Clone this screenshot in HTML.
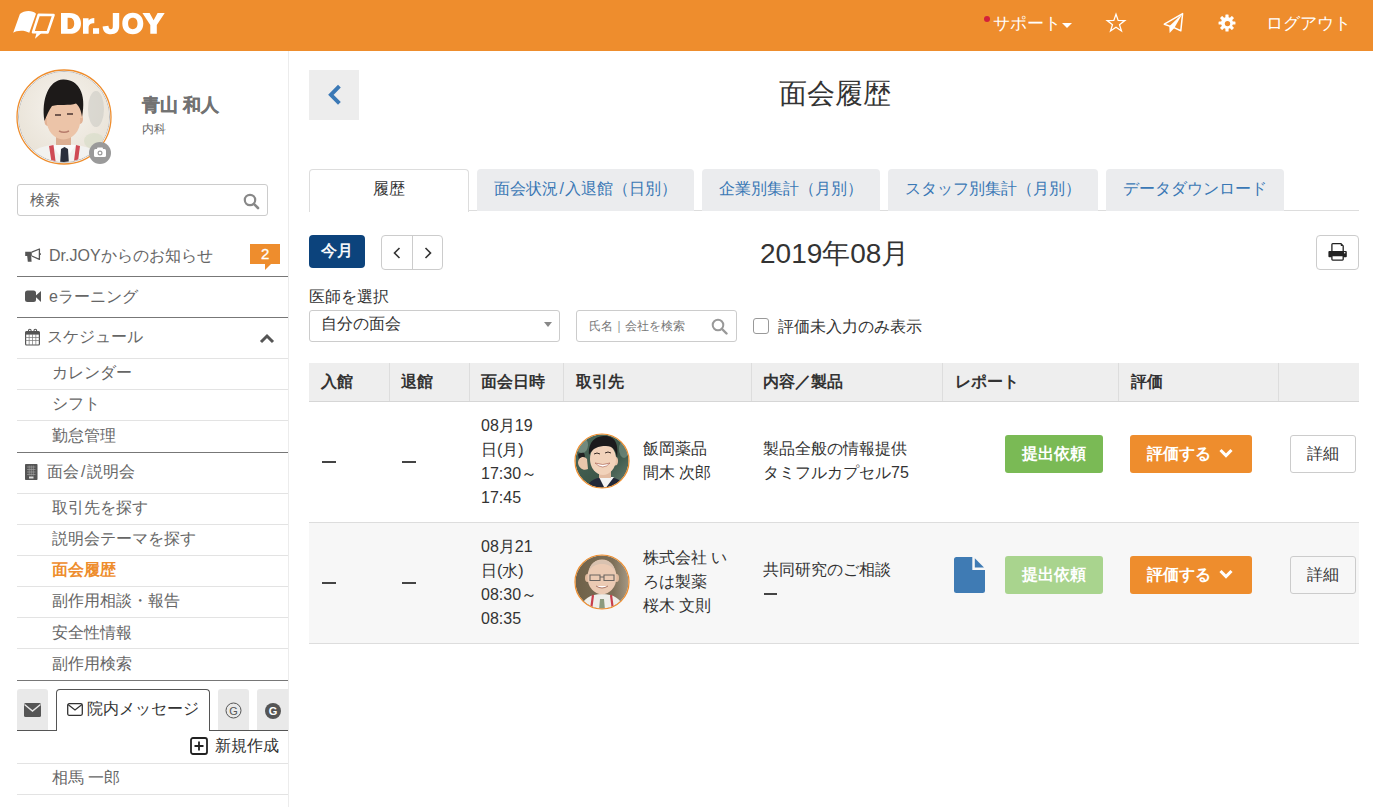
<!DOCTYPE html>
<html lang="ja">
<head>
<meta charset="utf-8">
<style>
*{box-sizing:border-box;margin:0;padding:0}
html,body{width:1373px;height:807px;overflow:hidden;background:#fff}
body{font-family:"Liberation Sans",sans-serif;color:#333;font-size:16px;position:relative}
.abs{position:absolute}
#hdr{position:absolute;left:0;top:0;width:1373px;height:51px;background:#ee8d2d}
#side{position:absolute;left:0;top:51px;width:289px;height:756px;border-right:1px solid #ececec}
.t{position:absolute;white-space:nowrap;line-height:1}
.hl{position:absolute;left:17px;width:271px;height:1px}
.dk{background:#777}
.lt{background:#e3e3e3}
.side-item{color:#666;font-size:16px}
.tab{top:169px;height:42px;background:#ebecee;border-radius:4px 4px 0 0}
.tabt{top:181px;font-size:16px;color:#3a78b5}
.vl{top:363px;width:1px;height:38px;background:#ddd}
.th{top:374px;font-size:16px;font-weight:bold;color:#333}
.td{font-size:16px;color:#333;white-space:nowrap}
.btn{color:#fff;font-size:16px;font-weight:bold;border-radius:3px;line-height:38px;padding-left:17px}
.btn2{color:#333;font-size:16px;border:1px solid #ccc;border-radius:3px;line-height:36px;text-align:center;background:transparent}
</style>
</head>
<body>
<div id="hdr">
  <svg class="abs" style="left:0;top:0" width="180" height="51" viewBox="0 0 180 51">
    <path d="M13.2 32.8 C16 30.5 24 29.5 29.3 32.8 L36 13.7 C33 10 24 10 19.9 13.9 Z" fill="#fff"/>
    <path d="M38.7 14.8 L53.5 15 L47.6 32.4 L33 32.3 Z" fill="none" stroke="#fff" stroke-width="2.6" stroke-linejoin="round"/>
    <path d="M36.5 33 L35 38.7 L41.5 33 Z" fill="#fff"/>
    <path fill="#fff" fill-rule="evenodd" d="M61 13 H69.5 C77 13 81 17.2 81 23.4 C81 29.6 77 33.8 69.5 33.8 H61 Z M67.6 17.8 V29 H69.2 C72.5 29 74.2 27 74.2 23.4 C74.2 19.8 72.5 17.8 69.2 17.8 Z"/>
    <path fill="#fff" d="M83 18.3 H88.6 V20.6 C89.6 18.9 91.4 18 94.3 18 V23.2 C90.6 23.2 88.6 24.6 88.6 27.8 V33.8 H83 Z"/>
    <rect x="93" y="28.2" width="6.1" height="5.6" fill="#fff"/>
    <path fill="#fff" d="M112.8 13 H119.2 V26 C119.2 31.5 116 34.2 110.9 34.2 C105.8 34.2 102.9 31.4 102.6 26.4 L108.4 25.8 C108.6 28.2 109.4 29.2 110.9 29.2 C112.3 29.2 112.8 28.2 112.8 26.2 Z"/>
    <path fill="#fff" fill-rule="evenodd" d="M132.8 12.7 C139.2 12.7 143.3 17 143.3 23.5 C143.3 30 139.2 34.3 132.8 34.3 C126.4 34.3 122.3 30 122.3 23.5 C122.3 17 126.4 12.7 132.8 12.7 Z M132.8 17.8 C130 17.8 128.1 19.9 128.1 23.5 C128.1 27.1 130 29.2 132.8 29.2 C135.6 29.2 137.5 27.1 137.5 23.5 C137.5 19.9 135.6 17.8 132.8 17.8 Z"/>
    <path fill="#fff" d="M142.4 13 H149.6 L153.6 20.3 L157.6 13 H164.7 L156.8 25 V33.8 H150.3 V25 Z"/>
  </svg>
  <div class="abs" style="left:984px;top:16px;width:6px;height:6px;border-radius:50%;background:#d3213a"></div>
  <div class="t" style="left:993px;top:15px;font-size:17px;color:#fff">サポート</div>
  <div class="abs" style="left:1062px;top:23px;width:0;height:0;border-left:5px solid transparent;border-right:5px solid transparent;border-top:5px solid #fff"></div>
  <svg class="abs" style="left:1100px;top:8px" width="32" height="30" viewBox="0 0 32 30"><path transform="translate(16 15.2) scale(0.9) translate(-16 -15.2)" d="M16 5.2 L18.4 12.2 L25.8 12.3 L19.9 16.8 L22.1 23.9 L16 19.6 L9.9 23.9 L12.1 16.8 L6.2 12.3 L13.6 12.2 Z" fill="none" stroke="#fff" stroke-width="1.4" stroke-linejoin="miter"/></svg>
  <svg class="abs" style="left:1160px;top:10px" width="26" height="26" viewBox="1160 10 26 26"><path d="M1164.3 24.2 L1182.6 13.6 L1180.8 30.8 L1174 27.6 Z" fill="none" stroke="#fff" stroke-width="1.5" stroke-linejoin="round"/><path d="M1169.3 26.3 L1182.6 13.6 L1174.3 27.9 L1169.6 33 Z" fill="#fff"/></svg>
  <svg class="abs" style="left:1215.5px;top:11.8px" width="22" height="22" viewBox="-11 -11 22 22"><g fill="#fff" transform="scale(0.94)"><circle r="6.4"/><rect x="-1.7" y="-9" width="3.4" height="18" rx="0.6"/><rect x="-1.7" y="-9" width="3.4" height="18" rx="0.6" transform="rotate(45)"/><rect x="-1.7" y="-9" width="3.4" height="18" rx="0.6" transform="rotate(90)"/><rect x="-1.7" y="-9" width="3.4" height="18" rx="0.6" transform="rotate(135)"/></g><circle r="2.7" fill="#ee8d2d" transform="translate(0.5 0.6)"/></svg>
  <div class="t" style="left:1266px;top:15px;font-size:17px;color:#fff">ログアウト</div>
</div>

<div id="side">
</div>
<!-- avatar -->
<svg class="abs" style="left:16px;top:69px" width="96" height="96" viewBox="0 0 96 96">
  <defs><clipPath id="cp1"><circle cx="48" cy="48" r="45"/></clipPath>
  <radialGradient id="bg1" cx="0.5" cy="0.4" r="0.7"><stop offset="0" stop-color="#f6f3ee"/><stop offset="1" stop-color="#e6dfd2"/></radialGradient></defs>
  <circle cx="48" cy="48" r="47" fill="#fff" stroke="#ee8d2d" stroke-width="1.3"/>
  <circle cx="48" cy="48" r="45.5" fill="none" stroke="#aaa" stroke-width="0.8"/>
  <g clip-path="url(#cp1)">
    <rect x="0" y="0" width="96" height="96" fill="url(#bg1)"/>
    <ellipse cx="80" cy="40" rx="8" ry="18" fill="#c6c5c0" opacity="0.5"/>
    <ellipse cx="78" cy="72" rx="10" ry="8" fill="#d5dcc6" opacity="0.6"/>
    <path d="M10 96 C12 82 22 76 48 75 C74 76 84 82 86 96 Z" fill="#f2f2f0"/>
    <rect x="40" y="62" width="15" height="16" fill="#dcae92"/>
    <path d="M36 76 L48 92 L60 76 Z" fill="#fbfbfb"/>
    <path d="M45 80 L48.5 78 L52 80 L53 96 L44 96 Z" fill="#2a2e3b"/>
    <path d="M33 77 L36 96 L40 96 L37.5 76 Z" fill="#cf4a55"/>
    <path d="M60 76 L57.5 96 L61.5 96 L64 77 Z" fill="#cf4a55"/>
    <ellipse cx="31.5" cy="52" rx="3" ry="5" fill="#e2b295"/>
    <ellipse cx="64" cy="50" rx="3" ry="5" fill="#e2b295"/>
    <ellipse cx="47.5" cy="51" rx="16.8" ry="19.5" fill="#ecc4a8"/><rect x="30" y="32" width="36.5" height="17" fill="#ecc4a8"/>
    <path d="M28.5 52 C25 30 33 11 47 10.5 C62 10 71 24 66 48 C65 41 63 37 60 34.5 C54 37 42 35 36 37 C33 41 31 46 28.5 52 Z" fill="#1d1a19"/>
    <path d="M39 46 h6 M51 45 h6" stroke="#4a3530" stroke-width="1.4"/>
    <path d="M43 62 C46 63.5 50 63.5 53 62" fill="none" stroke="#b77c6c" stroke-width="1.4"/>
  </g>
  <circle cx="84" cy="84" r="11" fill="#9a9a9a"/>
  <rect x="78" y="80" width="12" height="8" rx="1.5" fill="#fff"/>
  <rect x="81" y="78.5" width="6" height="3" rx="1" fill="#fff"/>
  <circle cx="84" cy="84" r="2.5" fill="#9a9a9a"/>
  <circle cx="84" cy="84" r="1.3" fill="#fff"/>
</svg>
<div class="t" style="left:142px;top:96px;font-size:18px;font-weight:bold;color:#727272;-webkit-text-stroke:0.3px #727272">青山 和人</div>
<div class="t" style="left:142px;top:123px;font-size:12px;color:#666">内科</div>
<div class="abs" style="left:17px;top:184px;width:251px;height:32px;border:1px solid #ccc;border-radius:3px"></div>
<div class="t" style="left:30px;top:192px;font-size:15px;color:#666">検索</div>
<svg class="abs" style="left:243px;top:193px" width="17" height="17" viewBox="0 0 17 17"><circle cx="7" cy="7" r="5.2" fill="none" stroke="#888" stroke-width="2.2"/><path d="M10.8 10.8 L15 15" stroke="#888" stroke-width="2.6" stroke-linecap="round"/></svg>

<!-- menu -->
<svg class="abs" style="left:24px;top:247px" width="18" height="16" viewBox="24 247 18 16"><path d="M25.2 251.8 H31.8 V256 H31.2 L31.6 261.8 H27.8 L27.2 256 H25.2 Z" fill="#555"/><path d="M31.8 252.1 L39.4 249 V259.4 L31.8 256" fill="none" stroke="#555" stroke-width="1.3" stroke-linejoin="round"/><rect x="39.6" y="253.2" width="1.2" height="1.8" fill="#555"/></svg>
<div class="t side-item" style="left:49px;top:248px">Dr.JOYからのお知らせ</div>
<div class="abs" style="left:250px;top:244px;width:30px;height:20px;background:#ee8d2d"></div>
<div class="abs" style="left:265px;top:264px;width:0;height:0;border-right:6px solid transparent;border-top:6px solid #ee8d2d"></div>
<div class="t" style="left:261px;top:246px;font-size:15px;color:#fff;-webkit-text-stroke:0.3px #fff">2</div>
<div class="hl dk" style="top:276px"></div>

<svg class="abs" style="left:25px;top:290px" width="16" height="13" viewBox="0 0 16 13"><rect x="0" y="0.5" width="11" height="11.5" rx="2.5" fill="#555"/><path d="M10 6.2 L16 1 V12 Z" fill="#555"/></svg>
<div class="t side-item" style="left:49px;top:289px">eラーニング</div>
<div class="hl dk" style="top:317px"></div>

<svg class="abs" style="left:25px;top:328px" width="15" height="18" viewBox="0 0 15 18"><rect x="0.6" y="3.6" width="13.8" height="13.4" rx="1" fill="none" stroke="#555" stroke-width="1.2"/><rect x="0.6" y="3.6" width="13.8" height="3" fill="#555"/><path d="M0.6 9.5 h13.8 M0.6 12.5 h13.8 M4.2 6 v11 M7.5 6 v11 M10.8 6 v11" stroke="#777" stroke-width="0.7"/><path d="M3.5 5 V2.5 a1.3 1.3 0 0 1 2.6 0 V5 M9 5 V2.5 a1.3 1.3 0 0 1 2.6 0 V5" fill="none" stroke="#555" stroke-width="1.1"/></svg>
<div class="t side-item" style="left:47px;top:329px">スケジュール</div>
<svg class="abs" style="left:259px;top:332px" width="16" height="12" viewBox="0 0 16 12"><path d="M2 10 L8 4 L14 10" fill="none" stroke="#555" stroke-width="3"/></svg>
<div class="hl lt" style="top:358px"></div>
<div class="t side-item" style="left:52px;top:365px">カレンダー</div>
<div class="hl lt" style="top:389px"></div>
<div class="t side-item" style="left:52px;top:396px">シフト</div>
<div class="hl lt" style="top:420px"></div>
<div class="t side-item" style="left:52px;top:428px">勤怠管理</div>
<div class="hl dk" style="top:452px"></div>

<svg class="abs" style="left:25px;top:464px" width="13" height="17" viewBox="0 0 13 17"><rect x="0" y="0" width="12.5" height="16" rx="0.8" fill="#555"/><path d="M2 3 h8.5 M2 5.5 h8.5 M2 8 h8.5 M2 10.5 h8.5 M4.2 1.5 v10 M6.25 1.5 v10 M8.3 1.5 v10" stroke="#aaa" stroke-width="0.6"/><rect x="4" y="12.5" width="4.5" height="2" fill="#ddd"/></svg>
<div class="t side-item" style="left:47px;top:464px">面会<span style="padding:0 2px 0 2px">/</span>説明会</div>
<div class="hl lt" style="top:493px"></div>
<div class="t side-item" style="left:52px;top:500px">取引先を探す</div>
<div class="hl lt" style="top:524px"></div>
<div class="t side-item" style="left:52px;top:531px">説明会テーマを探す</div>
<div class="hl lt" style="top:555px"></div>
<div class="t side-item" style="left:52px;top:562px;color:#ee8d2d;font-weight:bold">面会履歴</div>
<div class="hl lt" style="top:586px"></div>
<div class="t side-item" style="left:52px;top:593px">副作用相談・報告</div>
<div class="hl lt" style="top:617px"></div>
<div class="t side-item" style="left:52px;top:625px">安全性情報</div>
<div class="hl lt" style="top:648px"></div>
<div class="t side-item" style="left:52px;top:656px">副作用検索</div>
<div class="hl dk" style="top:680px"></div>

<!-- message tabs -->
<div class="abs" style="left:17px;top:689px;width:31px;height:42px;background:#e9e9e9;border-radius:3px 3px 0 0"></div>
<svg class="abs" style="left:24px;top:703px" width="17" height="14" viewBox="0 0 17 14"><rect x="0" y="0" width="17" height="14" rx="1.5" fill="#555"/><path d="M0.5 1.5 L8.5 8 L16.5 1.5" fill="none" stroke="#e9e9e9" stroke-width="1.4"/></svg>
<div class="abs" style="left:56px;top:689px;width:154px;height:42px;background:#fff;border:1px solid #555;border-bottom:none;border-radius:4px 4px 0 0"></div>
<svg class="abs" style="left:67px;top:703px" width="16" height="13" viewBox="0 0 16 13"><rect x="0.7" y="0.7" width="14.6" height="11.6" rx="1.5" fill="none" stroke="#333" stroke-width="1.3"/><path d="M1 1.5 L8 7 L15 1.5" fill="none" stroke="#333" stroke-width="1.3"/></svg>
<div class="t" style="left:87px;top:701px;font-size:16px;color:#333">院内メッセージ</div>
<div class="abs" style="left:218px;top:689px;width:31px;height:42px;background:#e9e9e9;border-radius:3px 3px 0 0"></div>
<svg class="abs" style="left:225px;top:702px" width="17" height="17" viewBox="0 0 17 17"><circle cx="8.5" cy="8.5" r="7.5" fill="none" stroke="#555" stroke-width="1"/><text x="8.5" y="12.5" font-size="11" text-anchor="middle" fill="#555" font-family="Liberation Sans">G</text></svg>
<div class="abs" style="left:257px;top:689px;width:31px;height:42px;background:#e9e9e9;border-radius:3px 0 0 0"></div>
<svg class="abs" style="left:264px;top:702px" width="18" height="18" viewBox="0 0 18 18"><circle cx="9" cy="9" r="8" fill="#555"/><text x="9" y="13" font-size="11" font-weight="bold" text-anchor="middle" fill="#fff" font-family="Liberation Sans">G</text></svg>
<div class="hl" style="top:730px;left:17px;width:39px;background:#555"></div>
<div class="hl" style="top:730px;left:210px;width:78px;background:#555"></div>

<svg class="abs" style="left:190px;top:737px" width="18" height="18" viewBox="0 0 18 18"><rect x="1" y="1" width="16" height="16" rx="2" fill="none" stroke="#222" stroke-width="1.8"/><path d="M9 4.5 V13.5 M4.5 9 H13.5" stroke="#222" stroke-width="1.8"/></svg>
<div class="t" style="left:215px;top:738px;font-size:16px;color:#333">新規作成</div>
<div class="hl lt" style="top:763px"></div>
<div class="t side-item" style="left:52px;top:770px">相馬 一郎</div>
<div class="hl lt" style="top:794px"></div>


<!-- main -->
<div class="abs" style="left:309px;top:70px;width:50px;height:50px;background:#ededed"></div>
<svg class="abs" style="left:326px;top:84px" width="18" height="22" viewBox="0 0 18 22"><path d="M13.4 2.2 L4.9 10.8 L13.4 19.4" fill="none" stroke="#3b79b6" stroke-width="3.9"/></svg>
<div class="t" style="left:779px;top:80px;font-size:28px;color:#333">面会履歴</div>

<!-- tabs -->
<div class="abs" style="left:309px;top:210px;width:1050px;height:1px;background:#ddd"></div>
<div class="abs" style="left:309px;top:169px;width:160px;height:43px;background:#fff;border:1px solid #ddd;border-bottom:none;border-radius:4px 4px 0 0"></div>
<div class="t" style="left:373px;top:181px;font-size:16px;color:#333">履歴</div>
<div class="abs tab" style="left:477px;width:217px"></div>
<div class="t tabt" style="left:494px">面会状況<span style="padding:0 1.5px">/</span>入退館（日別）</div>
<div class="abs tab" style="left:702px;width:178px"></div>
<div class="t tabt" style="left:719px">企業別集計（月別）</div>
<div class="abs tab" style="left:888px;width:210px"></div>
<div class="t tabt" style="left:905px">スタッフ別集計（月別）</div>
<div class="abs tab" style="left:1106px;width:178px"></div>
<div class="t tabt" style="left:1123px">データダウンロード</div>

<!-- toolbar -->
<div class="abs" style="left:309px;top:235px;width:56px;height:33px;background:#0c437c;border-radius:4px"></div>
<div class="t" style="left:321px;top:243px;font-size:16px;color:#fff;-webkit-text-stroke:0.5px #fff">今月</div>
<div class="abs" style="left:381px;top:235px;width:62px;height:35px;border:1px solid #ccc;border-radius:4px"></div>
<div class="abs" style="left:412px;top:235px;width:1px;height:35px;background:#ccc"></div>
<svg class="abs" style="left:390px;top:245px" width="14" height="16" viewBox="0 0 14 16"><path d="M9.5 3 L4.5 8 L9.5 13" fill="none" stroke="#333" stroke-width="1.6"/></svg>
<svg class="abs" style="left:420.5px;top:245px" width="14" height="16" viewBox="0 0 14 16"><path d="M4.5 3 L9.5 8 L4.5 13" fill="none" stroke="#333" stroke-width="1.6"/></svg>
<div class="t" style="left:760px;top:240px;font-size:28px;color:#333">2019年08月</div>
<div class="abs" style="left:1316px;top:235px;width:43px;height:35px;border:1px solid #ccc;border-radius:4px"></div>
<svg class="abs" style="left:1326px;top:241px" width="24" height="22" viewBox="1326 241 24 22"><path d="M1331.9 252 V244.6 Q1331.9 243.7 1332.8 243.7 H1341 L1343.2 245.9 V252" fill="#fff" stroke="#222" stroke-width="1.3"/><path d="M1340.8 243.7 V246 H1343.2 Z" fill="#222"/><rect x="1328.4" y="251" width="18.4" height="6.3" rx="1" fill="#222"/><circle cx="1344.7" cy="252.8" r="0.75" fill="#fff"/><rect x="1331.9" y="255.6" width="11.3" height="4.5" rx="0.8" fill="#fff" stroke="#222" stroke-width="1.3"/></svg>

<div class="t" style="left:309px;top:289px;font-size:16px;color:#333">医師を選択</div>
<div class="abs" style="left:309px;top:310px;width:251px;height:32px;border:1px solid #ccc;border-radius:3px"></div>
<div class="t" style="left:321px;top:316px;font-size:16px;color:#333">自分の面会</div>
<div class="abs" style="left:544px;top:322px;width:0;height:0;border-left:4px solid transparent;border-right:4px solid transparent;border-top:5px solid #888"></div>
<div class="abs" style="left:576px;top:310px;width:161px;height:32px;border:1px solid #ccc;border-radius:3px"></div>
<div class="t" style="left:589px;top:320px;font-size:12px;color:#777">氏名｜会社を検索</div>
<svg class="abs" style="left:711px;top:318px" width="17" height="17" viewBox="0 0 17 17"><circle cx="7" cy="7" r="5.3" fill="none" stroke="#999" stroke-width="2"/><path d="M11 11 L15.5 15.5" stroke="#999" stroke-width="2.4" stroke-linecap="round"/></svg>
<div class="abs" style="left:753px;top:318px;width:16px;height:16px;border:1px solid #999;border-radius:3px;background:#fff"></div>
<div class="t" style="left:778px;top:319px;font-size:16px;color:#333">評価未入力のみ表示</div>

<!-- table -->
<div class="abs" style="left:309px;top:363px;width:1050px;height:39px;background:#eee;border-bottom:1px solid #d6d6d6"></div>
<div class="abs vl" style="left:389px"></div>
<div class="abs vl" style="left:469px"></div>
<div class="abs vl" style="left:563px"></div>
<div class="abs vl" style="left:751px"></div>
<div class="abs vl" style="left:942px"></div>
<div class="abs vl" style="left:1118px"></div>
<div class="abs vl" style="left:1278px"></div>
<div class="t th" style="left:321px">入館</div>
<div class="t th" style="left:401px">退館</div>
<div class="t th" style="left:481px">面会日時</div>
<div class="t th" style="left:576px">取引先</div>
<div class="t th" style="left:763px">内容／製品</div>
<div class="t th" style="left:955px">レポート</div>
<div class="t th" style="left:1131px">評価</div>

<div class="abs" style="left:309px;top:522px;width:1050px;height:1px;background:#ddd"></div>
<div class="abs" style="left:309px;top:523px;width:1050px;height:120px;background:#f7f7f7"></div>
<div class="abs" style="left:309px;top:643px;width:1050px;height:1px;background:#ddd"></div>

<!-- row 1 -->
<div class="abs" style="left:322px;top:461px;width:14px;height:1.6px;background:#444"></div>
<div class="abs" style="left:402px;top:461px;width:14px;height:1.6px;background:#444"></div>
<div class="abs td" style="left:481px;top:414px;line-height:24px;white-space:normal">08月19<br>日(月)<br>17:30～<br>17:45</div>
<div class="abs td" style="left:643px;top:437px;line-height:24px">飯岡薬品<br>間木 次郎</div>
<div class="abs td" style="left:763px;top:437px;line-height:24px">製品全般の情報提供<br>タミフルカプセル75</div>
<div class="abs btn" style="left:1005px;top:435px;width:98px;height:38px;background:#7aba55">提出依頼</div>
<div class="abs btn" style="left:1130px;top:435px;width:122px;height:38px;background:#ee8d2d">評価する</div>
<svg class="abs" style="left:1218px;top:445px" width="16" height="16" viewBox="0 0 16 16"><path d="M2.5 5 L8 10.5 L13.5 5" fill="none" stroke="#fff" stroke-width="3.1"/></svg>
<div class="abs btn2" style="left:1290px;top:435px;width:66px;height:38px">詳細</div>

<!-- row 2 -->
<div class="abs" style="left:322px;top:582px;width:14px;height:1.6px;background:#444"></div>
<div class="abs" style="left:402px;top:582px;width:14px;height:1.6px;background:#444"></div>
<div class="abs td" style="left:481px;top:535px;line-height:24px">08月21<br>日(水)<br>08:30～<br>08:35</div>
<div class="abs td" style="left:643px;top:546px;line-height:24px">株式会社 い<br>ろは製薬<br>桜木 文則</div>
<div class="abs td" style="left:763px;top:558px;line-height:24px">共同研究のご相談</div>
<div class="abs" style="left:764px;top:593px;width:13px;height:1.5px;background:#444"></div>
<svg class="abs" style="left:954px;top:557px" width="32" height="37" viewBox="0 0 32 37"><path d="M0 2.5 Q0 0 2.5 0 H18.3 V13 H31 V33.5 Q31 36 28.5 36 H2.5 Q0 36 0 33.5 Z" fill="#3f7bb4"/><path d="M20.8 1.2 V10.5 H30 Z" fill="#3f7bb4"/></svg>
<div class="abs btn" style="left:1005px;top:556px;width:98px;height:38px;background:#a9d48e">提出依頼</div>
<div class="abs btn" style="left:1130px;top:556px;width:122px;height:38px;background:#ee8d2d">評価する</div>
<svg class="abs" style="left:1218px;top:566px" width="16" height="16" viewBox="0 0 16 16"><path d="M2.5 5 L8 10.5 L13.5 5" fill="none" stroke="#fff" stroke-width="3.1"/></svg>
<div class="abs btn2" style="left:1290px;top:556px;width:66px;height:38px">詳細</div>
<!-- table avatars -->
<svg class="abs" style="left:574px;top:433px" width="56" height="56" viewBox="0 0 56 56">
  <defs><clipPath id="cp2"><circle cx="28" cy="28" r="26.5"/></clipPath>
  <linearGradient id="bg2" x1="0" y1="0" x2="1" y2="1"><stop offset="0" stop-color="#4d6a5c"/><stop offset="0.6" stop-color="#3c5648"/><stop offset="1" stop-color="#6d8478"/></linearGradient></defs>
  <g clip-path="url(#cp2)">
    <rect width="56" height="56" fill="url(#bg2)"/>
    <ellipse cx="8" cy="12" rx="6" ry="8" fill="#8fa59a" opacity="0.6"/>
    <ellipse cx="50" cy="16" rx="5" ry="9" fill="#7f978b" opacity="0.6"/>
    <path d="M12 56 C14 48 22 44 32 44 C42 44 50 48 52 56 Z" fill="#232838"/>
    <path d="M25 44 L31 56 L40 44 Z" fill="#f4f4f4"/>
    <rect x="25" y="36" width="12" height="9" fill="#e3bca2"/>
    <ellipse cx="41" cy="28" rx="3" ry="4.5" fill="#e8c3a8"/>
    <ellipse cx="29" cy="26" rx="13" ry="16" fill="#f1d2ba"/>
    <path d="M15 22 C14 8 22 3 31 3 C40 3 45 9 43 25 C42 17 39 13 32 13 C24 13 19 15 15 22 Z" fill="#1b1a1c"/>
    <path d="M20 21 q3 -2 6 0 M31 20 q3 -2 6 0" fill="none" stroke="#3a2a25" stroke-width="1"/>
    <path d="M21 30 Q29 38 36 30 Q29 33 21 30 Z" fill="#fff" stroke="#b06a5a" stroke-width="0.7"/>
    <rect x="5" y="20" width="6.5" height="15" rx="1.5" fill="#222" transform="rotate(-10 8 27)"/>
    <path d="M4 30 C4 24 10 22 13 26 L14 36 C10 38 5 36 4 30 Z" fill="#eac6ab"/>
  </g>
  <circle cx="28" cy="28" r="27" fill="none" stroke="#ee8d2d" stroke-width="1.2"/>
</svg>
<svg class="abs" style="left:574px;top:554px" width="56" height="56" viewBox="0 0 56 56">
  <defs><clipPath id="cp3"><circle cx="28" cy="28" r="26.5"/></clipPath>
  <linearGradient id="bg3" x1="0" y1="0" x2="1" y2="0"><stop offset="0" stop-color="#6e6048"/><stop offset="0.7" stop-color="#7d6f58"/><stop offset="1" stop-color="#a89c88"/></linearGradient></defs>
  <g clip-path="url(#cp3)">
    <rect width="56" height="56" fill="url(#bg3)"/>
    <path d="M6 56 C8 45 16 40 28 40 C40 40 48 45 50 56 Z" fill="#eeeeea"/>
    <path d="M19 41 L17 56 M37 41 L39 56" stroke="#c9404c" stroke-width="2.2"/>
    <path d="M26 45 L30 45 L31 56 L25 56 Z" fill="#8b9a7e"/>
    <ellipse cx="13.5" cy="24" rx="2.5" ry="4" fill="#dfb89c"/>
    <ellipse cx="42.5" cy="24" rx="2.5" ry="4" fill="#dfb89c"/>
    <ellipse cx="28" cy="23" rx="14.5" ry="17.5" fill="#ebcab3"/>
    <path d="M15 17 C16 9 22 6 28 6 C34 6 40 9 41 17 C38 12 34 10 28 10 C22 10 18 12 15 17 Z" fill="#d9c2b0"/>
    <path d="M16 21 h10 v5.5 h-10 z M30 21 h10 v5.5 h-10 z M26 23 h4" fill="none" stroke="#6a6460" stroke-width="1.1"/>
    <path d="M22 32 Q28 36 34 32" fill="#fff" stroke="#a06a5a" stroke-width="0.9"/>
  </g>
  <circle cx="28" cy="28" r="27" fill="none" stroke="#ee8d2d" stroke-width="1.2"/>
</svg>
</body>
</html>
